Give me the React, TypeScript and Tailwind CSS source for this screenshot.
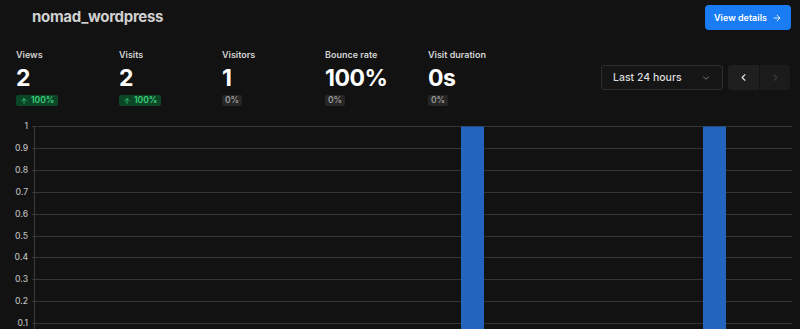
import { ArrowRight, ArrowUp, ChevronDown, ChevronLeft, ChevronRight } from 'lucide-react';

type Metric = {
  label: string;
  value: string;
  change: string;
  up: boolean;
};

const metrics: Metric[] = [
  { label: 'Views', value: '2', change: '100%', up: true },
  { label: 'Visits', value: '2', change: '100%', up: true },
  { label: 'Visitors', value: '1', change: '0%', up: false },
  { label: 'Bounce rate', value: '100%', change: '0%', up: false },
  { label: 'Visit duration', value: '0s', change: '0%', up: false },
];

// chart geometry (svg coords, top of svg sits at page y=116)
const TOP = 10;
const STEP = 21.9;
const ticks = [1, 0.9, 0.8, 0.7, 0.6, 0.5, 0.4, 0.3, 0.2, 0.1];
const bars = [461, 703];

function MetricCard({ metric }: { metric: Metric }) {
  return (
    <div className="w-[103px] flex flex-col">
      <div className="text-[9px] leading-[12px] font-semibold text-[#d4d4d4]">{metric.label}</div>
      <div className="mt-[3px] text-[23px] leading-[28px] font-bold text-white tracking-[-0.5px]">{metric.value}</div>
      <div className="mt-[3px] flex">
        {metric.up ? (
          <span className="flex items-center gap-[3px] h-[11px] px-[4px] rounded-[2px] bg-[#0b4626] text-[#3dd07c] text-[8.5px] font-semibold leading-none">
            <ArrowUp className="w-[8px] h-[8px]" strokeWidth={2.25} />
            {metric.change}
          </span>
        ) : (
          <span className="flex items-center h-[11px] px-[3px] rounded-[2px] bg-[#262626] text-[#9a9a9a] text-[8.5px] font-semibold leading-none">
            {metric.change}
          </span>
        )}
      </div>
    </div>
  );
}

function Chart() {
  return (
    <svg width={800} height={213} className="block">
      {ticks.map((t, i) => {
        const y = Math.round(TOP + i * STEP) + 0.5;
        return (
          <g key={t}>
            <line x1={32} x2={792} y1={y} y2={y} stroke="#353535" strokeWidth={1} />
            <text
              x={28}
              y={y + 2.5}
              textAnchor="end"
              fontSize={8.5}
              fill="#bdbdbd"
              fontFamily="Inter, sans-serif"
              fontWeight={500}
            >
              {t}
            </text>
          </g>
        );
      })}
      <line x1={34.5} x2={34.5} y1={TOP} y2={213} stroke="#3a3a3a" strokeWidth={1} />
      {bars.map((x) => (
        <rect key={x} x={x} y={TOP + 0.5} width={23} height={213 - TOP} fill="#2264be" />
      ))}
    </svg>
  );
}

export default function App() {
  return (
    <div className="w-[800px] h-[329px] overflow-hidden bg-[#121212] font-['Inter',sans-serif]">
      {/* Header */}
      <div className="flex items-center justify-between pt-[5px] pl-[32px] pr-[9px]">
        <h1 className="text-[15px] font-bold text-[#d0d0d0] tracking-[-0.3px]">nomad_wordpress</h1>
        <button className="flex items-center justify-center gap-[5px] w-[86px] h-[25px] rounded-[4px] bg-[#1a7cf2] text-white text-[9px] font-semibold">
          View details
          <ArrowRight className="w-[10px] h-[10px]" strokeWidth={2} />
        </button>
      </div>

      {/* Metrics + controls */}
      <div className="flex items-start justify-between mt-[19px] pl-[16px] pr-[10px]">
        <div className="flex">
          {metrics.map((m) => (
            <MetricCard key={m.label} metric={m} />
          ))}
        </div>
        <div className="flex items-center gap-[5px] mt-[16px]">
          <div className="flex items-center justify-between w-[122px] h-[25px] px-[11px] rounded-[3px] border border-[#2e2e2e] bg-[#151515] text-[#dcdcdc] text-[10.5px] font-medium">
            Last 24 hours
            <ChevronDown className="w-[10px] h-[10px] text-[#8a8a8a]" strokeWidth={2} />
          </div>
          <div className="flex h-[25px] rounded-[3px] overflow-hidden">
            <button className="w-[31px] h-full flex items-center justify-center bg-[#1f1f1f] text-[#e5e5e5]">
              <ChevronLeft className="w-[11px] h-[11px]" strokeWidth={2.5} />
            </button>
            <div className="w-px bg-[#141414]" />
            <button className="w-[30px] h-full flex items-center justify-center bg-[#1b1b1b] text-[#3a3a3a]">
              <ChevronRight className="w-[11px] h-[11px]" strokeWidth={2.5} />
            </button>
          </div>
        </div>
      </div>

      {/* Chart */}
      <div className="mt-[10px]">
        <Chart />
      </div>
    </div>
  );
}
